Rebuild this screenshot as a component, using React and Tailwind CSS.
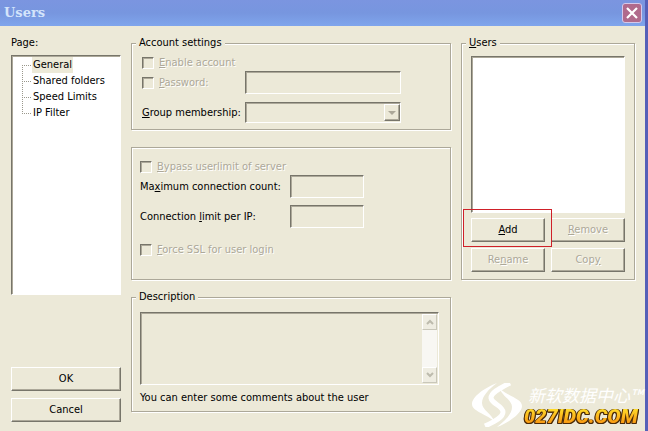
import clsx from "clsx";

const pages = ["General", "Shared folders", "Speed Limits", "IP Filter"];

const sunken =
    "border border-t-[#77756a] border-l-[#77756a] border-r-white border-b-white shadow-[inset_1px_1px_0_#aca899]";
const raised =
    "border border-t-white border-l-white border-r-[#77756a] border-b-[#77756a] shadow-[inset_-1px_-1px_0_#aca899]";
const disabledText = "text-[#aca899] [text-shadow:1px_1px_0_#fff]";

function Group({ title, className, children }) {
    return (
        <fieldset className="min-w-0 border border-[#aca899] shadow-[1px_1px_0_#fff,inset_1px_1px_0_#fff]">
            {title && <legend className="ml-1 bg-[#ece9d8] px-[3px] leading-4">{title}</legend>}
            <div className={className}>{children}</div>
        </fieldset>
    );
}

function Check({ id, children }) {
    return (
        <div className="flex h-4 items-center gap-[5px]">
            <input id={id} type="checkbox" disabled className={clsx("size-3 appearance-none", sunken)} />
            <label htmlFor={id} className={disabledText}>
                {children}
            </label>
        </div>
    );
}

function Button({ disabled, className, children }) {
    return (
        <button
            type="button"
            disabled={disabled}
            className={clsx("h-6 w-full bg-[#ece9d8]", raised, disabled && disabledText, className)}
        >
            {children}
        </button>
    );
}

function TitleBar() {
    return (
        <header className="flex h-[26px] items-center justify-between bg-linear-to-b from-[#7b95e0] via-[#7796df] to-[#7fa5ec] pr-[3px] pl-1">
            <h1 className="font-['DejaVu_Serif'] text-[13px] font-bold text-[#d3e4fb]">Users</h1>
            <button
                type="button"
                aria-label="Close"
                className="flex size-5 items-center justify-center rounded-[3px] border border-[#d5c8ea] bg-[#b06a8c]"
            >
                <svg viewBox="0 0 12 12" className="size-3" stroke="#fff" strokeWidth="2.2">
                    <path d="M1 1l10 10M11 1L1 11" />
                </svg>
            </button>
        </header>
    );
}

function PageTree() {
    return (
        <ul className={clsx("h-60 bg-white pt-px pl-[10px]", sunken)}>
            {pages.map((page, i) => (
                <li key={page} className="flex h-4 items-center">
                    <svg viewBox="0 0 10 16" className="h-4 w-[10px]" stroke="#9a988c" strokeDasharray="1 1">
                        <path d={i === 0 ? "M.5 8v8" : i === pages.length - 1 ? "M.5 0v8" : "M.5 0v16"} />
                        <path d="M0 8.5h10" />
                    </svg>
                    <a href="#page" className={clsx("px-px leading-4", i === 0 && "bg-[#ece9d8]")}>
                        {page}
                    </a>
                </li>
            ))}
        </ul>
    );
}

function ScrollButton({ d }) {
    return (
        <button
            type="button"
            disabled
            className="flex h-4 w-[15px] items-center justify-center border border-t-white border-l-white border-r-[#c9c7ba] border-b-[#c9c7ba] bg-[#efede2]"
        >
            <svg viewBox="0 0 8 6" className="h-[6px] w-2" fill="none" stroke="#bdbbad" strokeWidth="2">
                <path d={d} />
            </svg>
        </button>
    );
}

function Watermark() {
    return (
        <div className="pointer-events-none absolute right-[3px] bottom-1 flex items-center gap-[2px]">
            <svg viewBox="0 0 50 44" className="h-11 w-[50px]" fill="#fff">
                <path d="M25 0C12 5 0 14 0 21c0 7 12 9 22 17-2-7-12-11-12-18C10 13 17 6 25 0z" />
                <path d="M25 44c13-5 25-14 25-21 0-7-12-9-22-17 2 7 12 11 12 18 0 7-7 14-15 20z" />
                <path d="M38 0C26 6 19 10 19 15c1 6 12 8 12 14 0 5-7 9-18 14" fill="none" stroke="#fff" strokeWidth="5" />
            </svg>
            <div>
                <p className="pl-1 font-['Noto_Sans_CJK_SC',sans-serif] text-[17px] leading-[22px] whitespace-nowrap text-white italic">
                    新软数据中心™
                </p>
                <p className="bg-linear-to-b from-[#ffe92e] to-[#f58a0b] bg-clip-text font-[Roboto] text-[20px] leading-5 font-black text-transparent italic [filter:drop-shadow(1px_0_0_#4a2a08)_drop-shadow(-1px_0_0_#4a2a08)_drop-shadow(0_1px_0_#4a2a08)]">
                    027IDC.COM
                </p>
            </div>
        </div>
    );
}

export default function App() {
    return (
        <div className="relative flex min-h-screen flex-col border-r-[3px] border-[#5560b8] bg-[#ece9d8] font-['DejaVu_Sans_Condensed','DejaVu_Sans',sans-serif] text-[11px] leading-4 text-black">
            <TitleBar />
            <main className="grid flex-1 grid-cols-[110px_320fr_174fr] gap-[10px] pt-[9px] pr-[10px] pb-[9px] pl-[11px]">
                {/* Page tree and dialog buttons */}
                <nav className="flex flex-col">
                    <h2 className="mb-1">Page:</h2>
                    <PageTree />
                    <div className="mt-auto flex flex-col gap-[7px]">
                        <Button>OK</Button>
                        <Button>Cancel</Button>
                    </div>
                </nav>

                {/* Settings of the selected page */}
                <div className="flex flex-col">
                    <Group title="Account settings" className="h-[78px] px-[10px] pt-1">
                        <Check id="enable">
                            <u>E</u>nable account
                        </Check>
                        <div className="flex items-center">
                            <div className="w-[103px]">
                                <Check id="use-password">
                                    <u>P</u>assword:
                                </Check>
                            </div>
                            <input
                                type="password"
                                aria-label="Password"
                                disabled
                                className={clsx("h-[23px] w-[156px]", sunken)}
                            />
                        </div>
                        <div className="mt-2 flex items-center">
                            <label htmlFor="group" className="w-[103px] whitespace-nowrap">
                                <u>G</u>roup membership:
                            </label>
                            <div className="relative">
                                <select
                                    id="group"
                                    disabled
                                    className={clsx("block h-[21px] w-[156px] appearance-none", sunken)}
                                />
                                <span
                                    className={clsx(
                                        "pointer-events-none absolute top-[2px] right-px flex h-[17px] w-4 items-center justify-center bg-[#ece9d8]",
                                        raised
                                    )}
                                >
                                    <svg viewBox="0 0 8 4" className="h-1 w-2" fill="#aca899">
                                        <path d="M0 0h8L4 4z" />
                                    </svg>
                                </span>
                            </div>
                        </div>
                    </Group>

                    <div className="mt-[17px] mb-[9px]">
                        <Group className="h-[131px] px-2 pt-[11px]">
                            <Check id="bypass">
                                <u>B</u>ypass userlimit of server
                            </Check>
                            <div className="flex items-center">
                                <label htmlFor="max-count" className="w-[150px]">
                                    Ma<u>x</u>imum connection count:
                                </label>
                                <input id="max-count" disabled className={clsx("h-[23px] w-[74px]", sunken)} />
                            </div>
                            <div className="mt-[7px] flex items-center">
                                <label htmlFor="ip-limit" className="w-[150px]">
                                    Connection <u>l</u>imit per IP:
                                </label>
                                <input id="ip-limit" disabled className={clsx("h-[23px] w-[74px]", sunken)} />
                            </div>
                            <div className="mt-[14px]">
                                <Check id="force-ssl">
                                    <u>F</u>orce SSL for user login
                                </Check>
                            </div>
                        </Group>
                    </div>

                    <Group title="Description" className="h-[106px] pt-[7px] pr-[11px] pl-2">
                        <div className={clsx("flex h-[73px] p-px", sunken)}>
                            <textarea
                                id="description"
                                aria-label="Description"
                                disabled
                                className="min-w-0 flex-1 resize-none"
                            />
                            <div className="flex flex-col justify-between bg-[#f8f7f3]">
                                <ScrollButton d="M1 5l3-3 3 3" />
                                <ScrollButton d="M1 1l3 3 3-3" />
                            </div>
                        </div>
                        <p className="mt-[5px]">You can enter some comments about the user</p>
                    </Group>
                </div>

                {/* User list */}
                <div>
                    <Group
                        title={
                            <>
                                <u>U</u>sers
                            </>
                        }
                        className="h-[228px] px-[9px] pt-[5px]"
                    >
                        <select
                            size={8}
                            aria-label="Users"
                            className={clsx("block h-[157px] w-full appearance-none bg-white", sunken)}
                        />
                        <div className="mt-[5px] grid grid-cols-2 gap-[6px]">
                            <div className="relative">
                                <Button>
                                    <u>A</u>dd
                                </Button>
                                <span className="pointer-events-none absolute -top-[9px] -right-[7px] -bottom-[5px] -left-2 border border-[#cf2029]" />
                            </div>
                            <Button disabled>
                                <u>R</u>emove
                            </Button>
                            <Button disabled>
                                Re<u>n</u>ame
                            </Button>
                            <Button disabled>
                                Cop<u>y</u>
                            </Button>
                        </div>
                    </Group>
                </div>
            </main>
            <Watermark />
        </div>
    );
}
